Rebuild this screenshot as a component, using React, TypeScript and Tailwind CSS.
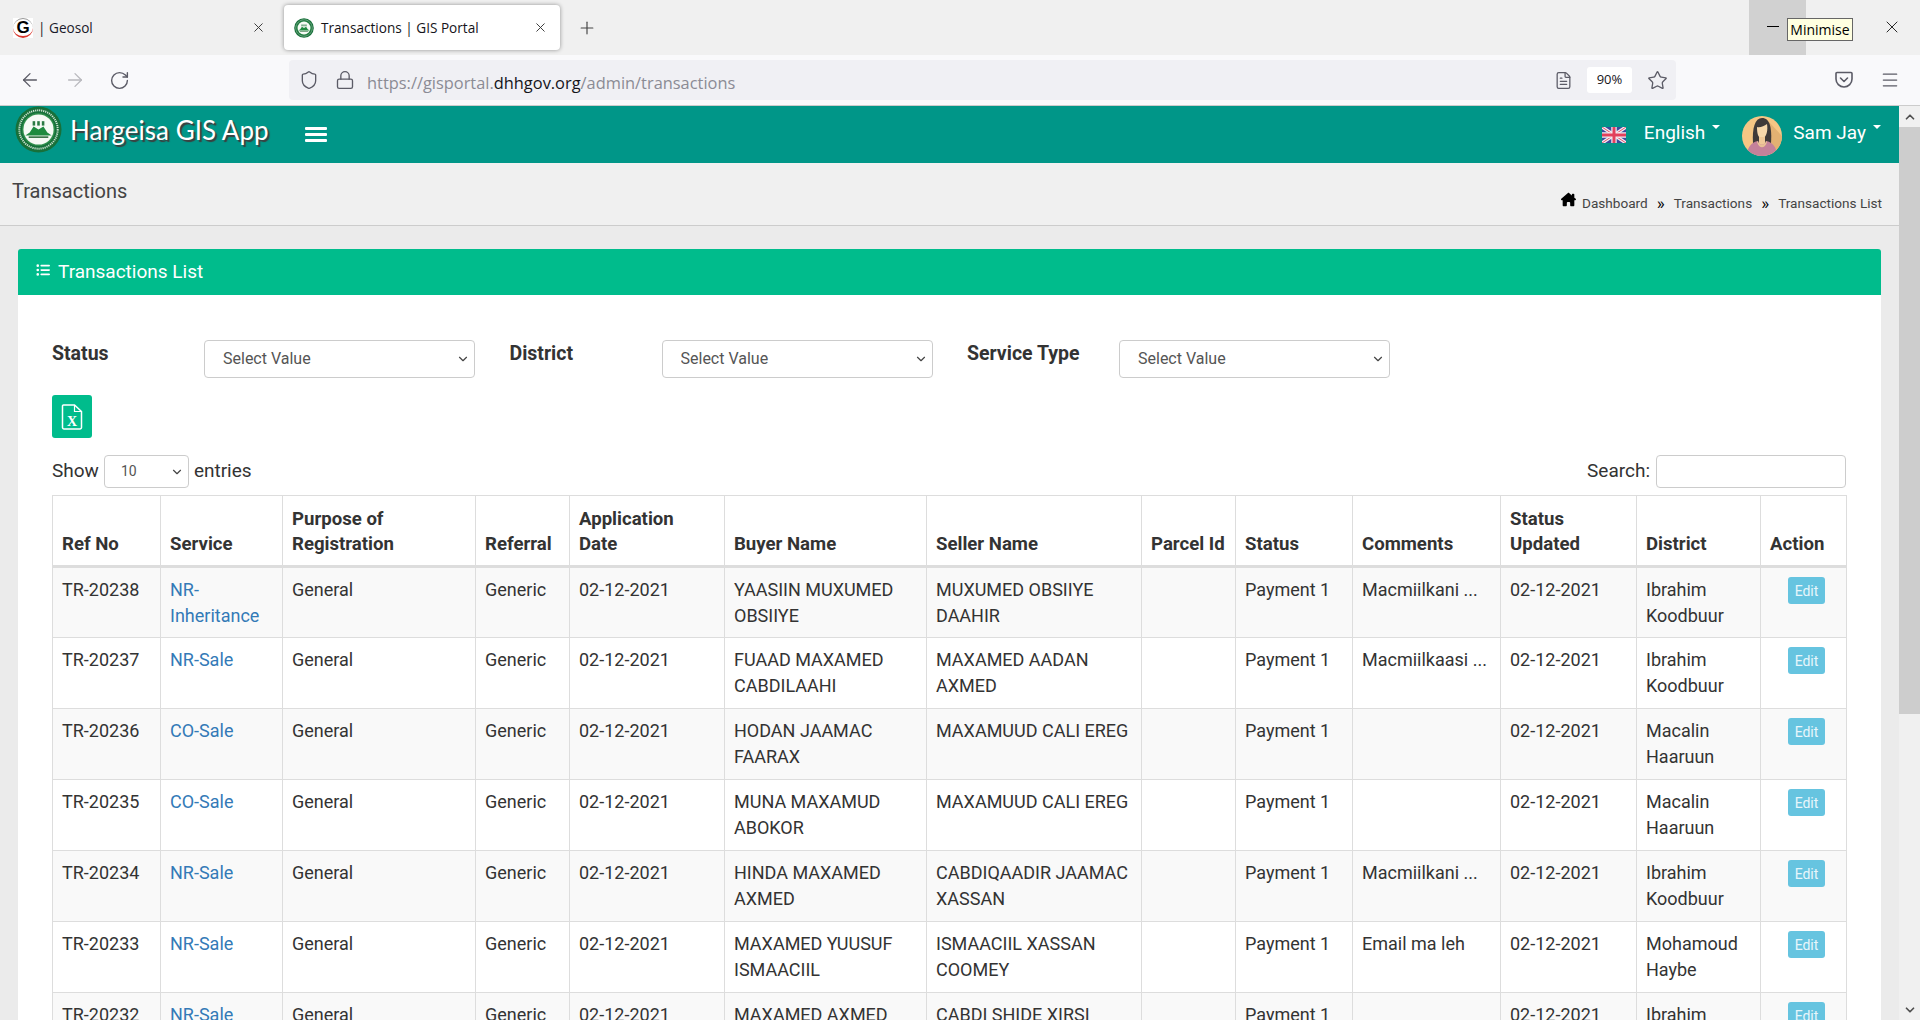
import React from 'react';
import {ArrowLeft, ArrowRight, ChevronDown, ChevronUp, FileText, Lock, Menu, Plus, RotateCw, Shield, Star, X} from 'lucide-react';
import {FaHouseChimney, FaListUl} from 'react-icons/fa6';

const rows = [
    {ref: 'TR-20238', service: 'NR-Inheritance', buyer: 'YAASIIN MUXUMED OBSIIYE', seller: 'MUXUMED OBSIIYE DAAHIR', comments: 'Macmiilkani ...', district: 'Ibrahim Koodbuur'},
    {ref: 'TR-20237', service: 'NR-Sale', buyer: 'FUAAD MAXAMED CABDILAAHI', seller: 'MAXAMED AADAN AXMED', comments: 'Macmiilkaasi ...', district: 'Ibrahim Koodbuur'},
    {ref: 'TR-20236', service: 'CO-Sale', buyer: 'HODAN JAAMAC FAARAX', seller: 'MAXAMUUD CALI EREG', comments: '', district: 'Macalin Haaruun'},
    {ref: 'TR-20235', service: 'CO-Sale', buyer: 'MUNA MAXAMUD ABOKOR', seller: 'MAXAMUUD CALI EREG', comments: '', district: 'Macalin Haaruun'},
    {ref: 'TR-20234', service: 'NR-Sale', buyer: 'HINDA MAXAMED AXMED', seller: 'CABDIQAADIR JAAMAC XASSAN', comments: 'Macmiilkani ...', district: 'Ibrahim Koodbuur'},
    {ref: 'TR-20233', service: 'NR-Sale', buyer: 'MAXAMED YUUSUF ISMAACIIL', seller: 'ISMAACIIL XASSAN COOMEY', comments: 'Email ma leh', district: 'Mohamoud Haybe'},
    {ref: 'TR-20232', service: 'NR-Sale', buyer: 'MAXAMED AXMED', seller: 'CABDI SHIDE XIRSI', comments: '', district: 'Ibrahim Koodbuur'},
];

const columns: [string, string][] = [
    ['Ref No', 'w-[108px]'],
    ['Service', 'w-[122px]'],
    ['Purpose of Registration', 'w-[193px]'],
    ['Referral', 'w-[94px]'],
    ['Application\nDate', 'w-[155px]'],
    ['Buyer Name', 'w-[202px]'],
    ['Seller Name', 'w-[215px]'],
    ['Parcel Id', 'w-[94px]'],
    ['Status', 'w-[117px]'],
    ['Comments', 'w-[148px]'],
    ['Status Updated', 'w-[136px]'],
    ['District', 'w-[124px]'],
    ['Action', 'w-[86px]'],
];

const Logo = ({size}: {size: number}) => (
    <svg width={size} height={size} viewBox="0 0 48 48">
        <circle cx="24" cy="24" r="23.5" fill="#17703a" />
        <circle cx="24" cy="24" r="19.6" fill="none" stroke="#cfe3d2" strokeWidth="2" strokeDasharray="1.2 0.9" />
        <circle cx="24" cy="24" r="16.8" fill="#2f8f4b" />
        <circle cx="24" cy="24" r="15.4" fill="#f6faf5" />
        <path d="M10.5 30 L15 27 L19 21 L24 24 L29 21 L33 27 L37.5 30 Z" fill="#1f8a3f" />
        <rect x="18" y="15.5" width="2.6" height="4.5" fill="#2a7a42" />
        <rect x="22.7" y="15.5" width="2.6" height="4.5" fill="#2a7a42" />
        <rect x="27.4" y="15.5" width="2.6" height="4.5" fill="#2a7a42" />
        <rect x="14" y="31" width="20" height="1.6" fill="#2e6b3c" />
    </svg>
);

const GeosolIcon = () => (
    <div className="relative flex h-5 w-5 items-center justify-center bg-white">
        <div className="absolute inset-0 rounded-full border-b-2 border-b-[#d9352c] border-t border-t-[#999]" />
        <span className="font-['Liberation_Sans',sans-serif] text-[17px] leading-none font-bold text-black">G</span>
    </div>
);

const UkFlag = () => (
    <svg width="24" height="16" viewBox="0 0 24 16" className="blur-[0.3px]">
        <rect width="24" height="16" fill="#3b4a9c" />
        <path d="M0 0 L24 16 M24 0 L0 16" stroke="#f3eef2" strokeWidth="3.4" />
        <path d="M0 0 L24 16 M24 0 L0 16" stroke="#e0526b" strokeWidth="1" />
        <path d="M12 0 V16 M0 8 H24" stroke="#f3eef2" strokeWidth="5.4" />
        <path d="M12 0 V16 M0 8 H24" stroke="#e2405c" strokeWidth="3" />
    </svg>
);

const Avatar = () => (
    <svg width="40" height="40" viewBox="0 0 40 40">
        <defs>
            <clipPath id="avatar-clip"><circle cx="20" cy="20" r="20" /></clipPath>
        </defs>
        <g clipPath="url(#avatar-clip)">
            <rect width="40" height="40" fill="#f5c684" />
            <path d="M27 6 L40 20 V40 H27 Z" fill="#e3b172" />
            <path d="M11 27 C10 12 13 2 20 2 C28 2 30 12 29 27 Z" fill="#3f3a39" />
            <path d="M15 11 C18 12 22 10 25 8 C26 14 25 21 20 23 C16 22 15 17 15 11 Z" fill="#f7d8ab" />
            <rect x="17" y="21" width="6" height="8" fill="#f0c998" />
            <path d="M5 40 C5 31 10 26 16 25 C17 30 23 30 24 25 C30 26 35 31 35 40 Z" fill="#c4819a" />
            <path d="M16 25 C17 30 23 30 24 25 L25 26 C23 33 17 33 15 26 Z" fill="#e9c195" />
        </g>
    </svg>
);

const ExcelIcon = () => (
    <svg width="22" height="26" viewBox="0 0 22 26" fill="none">
        <path d="M2.5 1 H13.5 L20.5 7.5 V23.5 A1.5 1.5 0 0 1 19 25 H3 A1.5 1.5 0 0 1 1.5 23.5 V2 A1 1 0 0 1 2.5 1 Z" stroke="#fff" strokeWidth="1.5" />
        <path d="M13.5 1 V7.5 H20.5" stroke="#fff" strokeWidth="1.2" />
        <text x="11" y="21.5" textAnchor="middle" fill="#fff" fontSize="14" fontWeight="700" fontFamily="'Liberation Serif', serif">X</text>
    </svg>
);

const Caret = () => <span className="inline-block h-0 w-0 border-x-[4px] border-t-[4px] border-x-transparent border-t-white" />;

const SelectBox = ({value, className, textClass}: {value: string, className: string, textClass: string}) => (
    <div className={`relative ${className}`}>
        <select defaultValue={value} className={`h-full w-full appearance-none rounded-[4px] border border-[#ccc] bg-white text-[#555] outline-none ${textClass}`}>
            <option>{value}</option>
        </select>
        <ChevronDown size={14} strokeWidth={2} className="pointer-events-none absolute top-1/2 right-[5px] -translate-y-1/2 text-[#444]" />
    </div>
);

const Filter = ({label}: {label: string}) => (
    <div className="flex w-[457.5px]">
        <label className="w-[152px] pt-[1px] text-[19.5px] leading-[26px] font-bold text-[#333]">{label}</label>
        <SelectBox value="Select Value" className="h-[38px] w-[271px]" textClass="pl-[18px] text-[16px]" />
    </div>
);

const BrowserChrome = () => (
    <div className="font-['Open_Sans',sans-serif]">
        <div className="flex h-[55px] bg-[#f0f0f0]">
            <div className="flex w-[284px] items-center pr-[18px] pl-[13px]">
                <GeosolIcon />
                <span className="mt-[1px] ml-[5px] text-[13.6px] text-[#1a1a2a]">| Geosol</span>
                <X size={15} strokeWidth={1.5} className="ml-auto text-[#333]" />
            </div>
            <div className="mt-[5px] flex h-[45px] w-[276px] items-center rounded-[4px] bg-white pr-[12px] pl-[10px] shadow-[0_0_4px_rgba(0,0,0,0.4)]">
                <Logo size={20} />
                <span className="mt-[1px] ml-[7px] text-[13.6px] text-[#15141a]">Transactions | GIS Portal</span>
                <X size={15} strokeWidth={1.5} className="ml-auto text-[#333]" />
            </div>
            <div className="flex items-center pl-[17px]">
                <Plus size={20} strokeWidth={1.4} className="text-[#444]" />
            </div>
            <div className="relative mr-[114px] ml-auto flex w-[57px] justify-center bg-[#d1d1d1] pt-[26px]">
                <span className="mr-[10px] h-px w-[12px] bg-black" />
                <div className="absolute top-[18px] left-[38px] z-10 flex h-[23px] w-[66px] items-center justify-center border border-[#666] bg-[#ffffe1] text-[14px] text-black">Minimise</div>
            </div>
            <X size={20} strokeWidth={1} className="absolute top-[17px] left-[1882px] text-black" />
        </div>
        <div className="flex h-[51px] items-center border-b border-[#ccc] bg-[#f9f9fb]">
            <div className="flex w-[289px] items-center gap-[23px] pl-[19px]">
                <ArrowLeft size={22} strokeWidth={1.4} className="text-[#5b5b66]" />
                <ArrowRight size={22} strokeWidth={1.4} className="text-[#b8b8bd]" />
                <RotateCw size={21} strokeWidth={1.6} className="text-[#5b5b66]" />
            </div>
            <div className="flex h-[40px] w-[1387px] items-center rounded-[4px] bg-[#f0f0f4] pr-[8px]">
                <Shield size={20} strokeWidth={1.6} className="ml-[10px] text-[#5b5b66]" />
                <Lock size={20} strokeWidth={1.6} className="ml-[16px] text-[#5b5b66]" />
                <span className="mt-[6px] ml-[12px] text-[16.4px] text-[#8b8b94]">https://gisportal.<span className="text-[#15141a]">dhhgov.org</span>/admin/transactions</span>
                <FileText size={19} strokeWidth={1.6} className="ml-auto text-[#5b5b66]" />
                <span className="mr-[15px] ml-[14px] flex h-[26px] w-[45px] items-center justify-center rounded-[3px] bg-white text-[13px] text-[#15141a]">90%</span>
                <Star size={21} strokeWidth={1.5} className="text-[#5b5b66]" />
            </div>
            <div className="ml-auto flex items-center gap-[26px] pr-[20px]">
                <svg width="20" height="20" viewBox="0 0 20 20" fill="none" stroke="#5b5b66" strokeWidth="1.6" strokeLinecap="round" strokeLinejoin="round">
                    <path d="M3 2.5h14a1 1 0 0 1 1 1V9a8 8 0 0 1-16 0V3.5a1 1 0 0 1 1-1Z" />
                    <path d="M6.5 8 L10 11.5 L13.5 8" />
                </svg>
                <Menu size={20} strokeWidth={1.5} className="text-[#5b5b66]" />
            </div>
        </div>
    </div>
);

const Navbar = () => (
    <div className="flex h-[57px] items-center bg-[#009688] text-white">
        <div className="-mt-[11px] ml-[15px]"><Logo size={47} /></div>
        <span className="-mt-[9px] ml-[8px] font-['Lato',sans-serif] text-[26px] [text-shadow:2px_2px_1px_#3d3d3d]">Hargeisa GIS App</span>
        <div className="ml-[36px] flex flex-col gap-[3px]">
            <span className="h-[3px] w-[22px] rounded-[1px] bg-white" />
            <span className="h-[3px] w-[22px] rounded-[1px] bg-white" />
            <span className="h-[3px] w-[22px] rounded-[1px] bg-white" />
        </div>
        <div className="ml-auto flex items-center pr-[18px] text-[19px]">
            <UkFlag />
            <span className="-mt-[2px] ml-[18px]">English</span>
            <span className="mb-[22px] ml-[7px]"><Caret /></span>
            <span className="mt-[2px] ml-[22px]"><Avatar /></span>
            <span className="-mt-[2px] ml-[11px]">Sam Jay</span>
            <span className="mb-[22px] ml-[7px]"><Caret /></span>
        </div>
    </div>
);

const PageHeader = () => (
    <div className="flex h-[63px] items-start border-b border-[#ccc] bg-[#f0f0f0] pr-[17px] pl-[12px]">
        <h1 className="mt-[15px] text-[20px] leading-[26px] text-[#444]">Transactions</h1>
        <div className="mt-[29px] ml-auto flex items-center text-[13.6px] leading-[20px] text-[#444]">
            <FaHouseChimney size={15} className="mr-[6px] mb-[6px] text-black" />
            <span>Dashboard</span>
            <span className="mx-[9px] text-[17px] text-black">»</span>
            <span>Transactions</span>
            <span className="mx-[9px] text-[17px] text-black">»</span>
            <span>Transactions List</span>
        </div>
    </div>
);

const TransactionsTable = () => (
    <table className="w-[1794px] table-fixed border-collapse text-[18px] leading-[25.7px] text-[#333]">
        <colgroup>
            {columns.map(([name, width]) => <col key={name} className={width} />)}
        </colgroup>
        <thead>
            <tr className="h-[71px]">
                {columns.map(([name]) => (
                    <th key={name} className="border border-b-[3px] border-[#ddd] px-[9px] pt-[10px] pb-[7px] text-left align-bottom text-[18.6px] font-bold whitespace-pre-line">{name}</th>
                ))}
            </tr>
        </thead>
        <tbody>
            {rows.map((row, i) => (
                <tr key={row.ref} className={`h-[71px] ${i % 2 === 0 ? 'bg-[#f9f9f9]' : 'bg-white'}`}>
                    <td className="border border-[#ddd] px-[9px] pt-[9px] align-top">{row.ref}</td>
                    <td className="border border-[#ddd] px-[9px] pt-[9px] align-top text-[#337ab7]">{row.service}</td>
                    <td className="border border-[#ddd] px-[9px] pt-[9px] align-top">General</td>
                    <td className="border border-[#ddd] px-[9px] pt-[9px] align-top">Generic</td>
                    <td className="border border-[#ddd] px-[9px] pt-[9px] align-top">02-12-2021</td>
                    <td className="border border-[#ddd] px-[9px] pt-[9px] align-top">{row.buyer}</td>
                    <td className="border border-[#ddd] px-[9px] pt-[9px] align-top">{row.seller}</td>
                    <td className="border border-[#ddd] px-[9px] pt-[9px] align-top"></td>
                    <td className="border border-[#ddd] px-[9px] pt-[9px] align-top">Payment 1</td>
                    <td className="border border-[#ddd] px-[9px] pt-[9px] align-top whitespace-nowrap">{row.comments}</td>
                    <td className="border border-[#ddd] px-[9px] pt-[9px] align-top">02-12-2021</td>
                    <td className="border border-[#ddd] px-[9px] pt-[9px] align-top">{row.district}</td>
                    <td className="border border-[#ddd] px-[9px] pt-[9px] align-top">
                        <button className="ml-[18px] flex h-[27px] w-[37px] items-center justify-center rounded-[3px] bg-[#66c4e0] text-[14px] leading-none text-[#e8f6fb]">Edit</button>
                    </td>
                </tr>
            ))}
        </tbody>
    </table>
);

const Scrollbar = () => (
    <div className="flex w-[21px] shrink-0 flex-col bg-[#f0f0f0]">
        <div className="flex h-[21px] items-center justify-center"><ChevronUp size={14} strokeWidth={3} className="text-[#505050]" /></div>
        <div className="h-[587px] bg-[#cdcdcd]" />
        <div className="mt-auto flex h-[21px] items-center justify-center"><ChevronDown size={14} strokeWidth={3} className="text-[#505050]" /></div>
    </div>
);

export default function App() {
    return <div className="relative flex h-[1020px] w-[1920px] flex-col overflow-hidden font-['Roboto',sans-serif]">
        <BrowserChrome />
        <div className="flex min-h-0 flex-1">
            <div className="min-w-0 flex-1 overflow-hidden bg-[#ebebeb]">
                <Navbar />
                <PageHeader />
                <div className="pt-[23px] pl-[18px]">
                    <div className="w-[1863px] overflow-hidden rounded-t-[3px]">
                        <div className="flex h-[46px] items-center gap-[8px] bg-[#00bc8c] pl-[18px] text-white">
                            <FaListUl size={14} className="mb-[4px]" />
                            <span className="text-[19px]">Transactions List</span>
                        </div>
                        <div className="bg-white px-[34px] pt-[45px] pb-[40px]">
                            <div className="flex">
                                <Filter label="Status" />
                                <Filter label="District" />
                                <Filter label="Service Type" />
                            </div>
                            <button className="mt-[17px] flex h-[43px] w-[40px] items-center justify-center rounded-[3px] bg-[#00bc8c]">
                                <ExcelIcon />
                            </button>
                            <div className="mt-[17px] flex h-[33px] w-[1794px] items-center text-[19px] text-[#333]">
                                <span>Show</span>
                                <SelectBox value="10" className="mx-[5px] h-[33px] w-[85px]" textClass="pl-[16px] text-[14px]" />
                                <span>entries</span>
                                <span className="ml-auto">Search:</span>
                                <input className="ml-[6px] h-[33px] w-[190px] rounded-[4px] border border-[#ccc] bg-white outline-none" />
                            </div>
                            <div className="mt-[7px]">
                                <TransactionsTable />
                            </div>
                        </div>
                    </div>
                </div>
            </div>
            <Scrollbar />
        </div>
    </div>;
}
